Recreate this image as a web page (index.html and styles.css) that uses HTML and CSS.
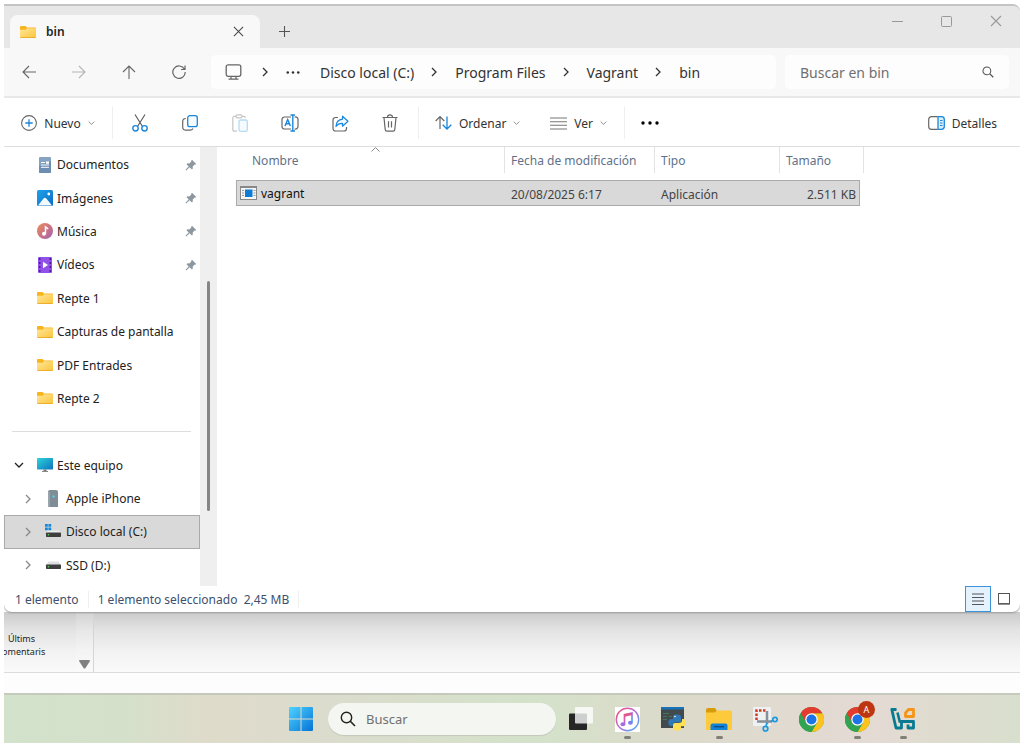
FILE: index.html
```html
<!DOCTYPE html>
<html lang="es">
<head>
  <meta charset="UTF-8">
  <title>bin</title>
  <link rel="stylesheet" href="styles.css">
</head>
<body>
  <!-- Shared icons -->
  <svg class="defs" width="0" height="0">
    <defs>
      <linearGradient id="gFolder" x1="0" y1="0" x2="1" y2="1">
        <stop offset="0" stop-color="#ffe59a"/><stop offset="1" stop-color="#fcc53a"/>
      </linearGradient>
      <linearGradient id="gWin" x1="0" y1="0" x2="1" y2="1">
        <stop offset="0" stop-color="#4fd3ff"/><stop offset="1" stop-color="#0573d6"/>
      </linearGradient>
      <linearGradient id="gBlue" x1="0" y1="0" x2="1" y2="1">
        <stop offset="0" stop-color="#1fa2ea"/><stop offset="1" stop-color="#0b6cc4"/>
      </linearGradient>
      <linearGradient id="gMusic" x1="0" y1="0" x2="1" y2="1">
        <stop offset="0" stop-color="#f08a55"/><stop offset="1" stop-color="#a45fb4"/>
      </linearGradient>
      <linearGradient id="gTunes" x1="0" y1="0" x2="1" y2="1">
        <stop offset="0" stop-color="#f7506f"/><stop offset=".5" stop-color="#b66be0"/><stop offset="1" stop-color="#3bb8f5"/>
      </linearGradient>
      <linearGradient id="gScreen" x1="0" y1="0" x2="1" y2="1">
        <stop offset="0" stop-color="#2fd3dc"/><stop offset="1" stop-color="#0b74bd"/>
      </linearGradient>
    </defs>
    <symbol id="folder" viewBox="0 0 16 12">
      <path d="M0 1a1 1 0 0 1 1-1h4.500l1.500 1.600h8a1 1 0 0 1 1 1V11H0z" fill="#f7b51d"/>
      <path d="M0 3.800h5.500L7 2.300h9V11.300a.7.7 0 0 1-.7.7H.7a.7.7 0 0 1-.7-.7z" fill="url(#gFolder)"/>
      <path d="M.5 11.600h15" stroke="#e3a220" stroke-width=".8"/>
    </symbol>
    <symbol id="pin" viewBox="0 0 12 12">
      <path d="M7 .8 11.200 5l-.9.7-.6-.1-2 2 .1 1.900-.9.9-2.300-2.200L1.200 11.500l-.7-.7 3.200-3.400L1.500 5.200l.9-.9 1.900.1 2-2-.1-.7z" fill="#8d979f"/>
    </symbol>
    <symbol id="right" viewBox="0 0 8 10">
      <path d="M2 1l4 4-4 4" fill="none" stroke="currentColor" stroke-width="1.300"/>
    </symbol>
    <symbol id="down" viewBox="0 0 10 8">
      <path d="M1 2l4 4 4-4" fill="none" stroke="currentColor" stroke-width="1.300"/>
    </symbol>
    <symbol id="dots" viewBox="0 0 18 4">
      <circle cx="2" cy="2" r="1.700"/><circle cx="9" cy="2" r="1.700"/><circle cx="16" cy="2" r="1.700"/>
    </symbol>
    <symbol id="close" viewBox="0 0 12 12">
      <path d="M1 1l10 10M11 1L1 11" fill="none" stroke="currentColor" stroke-width="1.100"/>
    </symbol>
    <symbol id="glass" viewBox="0 0 16 16">
      <circle cx="6.500" cy="6.500" r="5.200" fill="none" stroke="currentColor" stroke-width="1.400"/>
      <path d="M10.300 10.300L15 15" stroke="currentColor" stroke-width="1.600"/>
    </symbol>
    <symbol id="chrome" viewBox="0 0 24 24">
      <circle cx="12" cy="12" r="12" fill="#32a350"/>
      <path d="M12 6h10.400A12 12 0 0 1 12 24l5.200-9z" fill="#fcc31e"/>
      <path d="M1.600 6A12 12 0 0 1 22.400 6H12L6.800 15z" fill="#e33b2e"/>
      <path d="M1.600 6 6.800 15 12 18l5.200-3L12 24A12 12 0 0 1 1.600 6z" fill="#32a350"/>
      <circle cx="12" cy="12" r="6" fill="#fff"/>
      <circle cx="12" cy="12" r="4.800" fill="#1d73e8"/>
    </symbol>
  </svg>

  <div class="screen">
    <main class="window">
      <header class="tabs">
        <div class="tab">
          <svg class="folder" width="16" height="12"><use href="#folder"/></svg>
          <span class="tab-name">bin</span>
          <button class="plain" aria-label="Cerrar pestaña"><svg width="11" height="11"><use href="#close"/></svg></button>
        </div>
        <button class="plain new-tab" aria-label="Nueva pestaña">
          <svg width="11" height="11" viewBox="0 0 11 11"><path d="M5.500 0v11M0 5.500h11" stroke="#555" stroke-width="1.100"/></svg>
        </button>
        <div class="win-controls">
          <button class="plain" aria-label="Minimizar"><svg width="11" height="11"><path d="M0 5.500h11" stroke="#999"/></svg></button>
          <button class="plain" aria-label="Maximizar"><svg width="11" height="11"><rect x=".5" y=".5" width="10" height="10" rx="1" fill="none" stroke="#999"/></svg></button>
          <button class="plain" aria-label="Cerrar"><svg width="12" height="12"><use href="#close"/></svg></button>
        </div>
      </header>

      <nav class="navbar">
        <button class="plain" aria-label="Atrás"><svg width="14" height="14" viewBox="0 0 14 14"><path d="M14 7H1M7 1L1 7l6 6" fill="none" stroke="#666" stroke-width="1.100"/></svg></button>
        <button class="plain" aria-label="Adelante"><svg width="14" height="14" viewBox="0 0 14 14"><path d="M0 7h13M7 1l6 6-6 6" fill="none" stroke="#b5b5b5" stroke-width="1.100"/></svg></button>
        <button class="plain" aria-label="Arriba"><svg width="14" height="14" viewBox="0 0 14 14"><path d="M7 14V1M1 7l6-6 6 6" fill="none" stroke="#666" stroke-width="1.100"/></svg></button>
        <button class="plain" aria-label="Actualizar"><svg width="14" height="14" viewBox="0 0 14 14"><path d="M12.500 4.300A6.200 6.200 0 1 0 13.200 7M13 .5v4H9" fill="none" stroke="#666" stroke-width="1.200"/></svg></button>
        <div class="address">
          <svg width="17" height="16" viewBox="0 0 17 16"><rect x="1.200" y=".8" width="14.600" height="11.500" rx="2" fill="none" stroke="#666" stroke-width="1.300"/><path d="M6 12.500v2.500M11 12.500v2.500M3.500 15.200h10" stroke="#666" stroke-width="1.200"/></svg>
          <svg class="sep first" width="8" height="10"><use href="#right"/></svg>
          <svg class="more" width="14" height="3"><use href="#dots"/></svg>
          <button class="plain crumb">Disco local (C:)</button>
          <svg class="sep" width="8" height="10"><use href="#right"/></svg>
          <button class="plain crumb">Program Files</button>
          <svg class="sep" width="8" height="10"><use href="#right"/></svg>
          <button class="plain crumb">Vagrant</button>
          <svg class="sep" width="8" height="10"><use href="#right"/></svg>
          <button class="plain crumb">bin</button>
        </div>
        <label class="find">
          <input type="text" placeholder="Buscar en bin" aria-label="Buscar en bin">
          <svg width="12" height="12"><use href="#glass"/></svg>
        </label>
      </nav>

      <div class="commands">
        <button class="plain command new">
          <svg width="16" height="16" viewBox="0 0 16 16"><circle cx="8" cy="8" r="7.400" fill="none" stroke="#666" stroke-width="1.100"/><path d="M8 4.300v7.400M4.300 8h7.400" stroke="#1a86dc" stroke-width="1.300"/></svg>
          <span>Nuevo</span>
          <svg class="drop" width="7" height="6"><use href="#down"/></svg>
        </button>
        <div class="group">
          <button class="plain" aria-label="Cortar"><svg width="16" height="18" viewBox="0 0 16 18"><path d="M3 .5l7.500 12M13 .5L5.500 12.500" stroke="#555" stroke-width="1.100"/><circle cx="3.500" cy="14.300" r="2.700" fill="none" stroke="#1a86dc" stroke-width="1.400"/><circle cx="12.500" cy="14.300" r="2.700" fill="none" stroke="#1a86dc" stroke-width="1.400"/></svg></button>
          <button class="plain" aria-label="Copiar"><svg width="16" height="16" viewBox="0 0 16 16"><rect x="5.700" y=".7" width="9.600" height="11" rx="2.200" fill="#f6fbff" stroke="#1a86dc" stroke-width="1.300"/><path d="M3.800 3.500C1.800 3.500.7 4.500.7 6.500V12c0 2 1.300 3.200 3.300 3.200h4c1.500 0 2.500-.6 3-1.700" fill="none" stroke="#666" stroke-width="1.200"/></svg></button>
          <button class="plain" aria-label="Pegar"><svg width="16" height="18" viewBox="0 0 16 18"><path d="M5 17.200H2.500A1.600 1.600 0 0 1 .8 15.500V4a1.600 1.600 0 0 1 1.700-1.600H4M10 2.400h1.700A1.600 1.600 0 0 1 13.300 4" fill="none" stroke="#c6c6c6" stroke-width="1.200"/><rect x="4" y=".8" width="6" height="3" rx="1.300" fill="none" stroke="#c6c6c6" stroke-width="1.200"/><rect x="7" y="6" width="8.300" height="11.300" rx="1.600" fill="#f5fbff" stroke="#b5dcf5" stroke-width="1.300"/></svg></button>
          <button class="plain" aria-label="Cambiar nombre"><svg width="18" height="18" viewBox="0 0 18 18"><path d="M10 3H3.500A2.500 2.500 0 0 0 1 5.500v7A2.500 2.500 0 0 0 3.500 15H10M13.500 3h.5A2.500 2.500 0 0 1 17 5.500v7a2.500 2.500 0 0 1-3 2.500h-.5" fill="none" stroke="#666" stroke-width="1.200"/><path d="M4 12l2.700-6.500L9.400 12M5 9.800h3.500M9.500 1h4.500M9.500 17h4.500M11.800 1v16" fill="none" stroke="#1a86dc" stroke-width="1.400"/></svg></button>
          <button class="plain" aria-label="Compartir"><svg width="17" height="17" viewBox="0 0 17 17"><path d="M6 2.500H3.500A2.500 2.500 0 0 0 1 5v8.500A2.500 2.500 0 0 0 3.500 16h8.500a2.500 2.500 0 0 0 2.500-2.500V12" fill="none" stroke="#666" stroke-width="1.200"/><path d="M10.500 1.200l5.500 5-5.500 5V8.300C7.500 8.200 5.500 9.300 4 11.500c.2-4 2.500-6.900 6.500-7.300z" fill="#f3faff" stroke="#1a86dc" stroke-width="1.200" stroke-linejoin="round"/></svg></button>
          <button class="plain" aria-label="Eliminar"><svg width="16" height="18" viewBox="0 0 16 18"><path d="M.5 3.500h15M5.500 3.300a2.500 2.500 0 0 1 5 0M2 3.800l1.200 11.700A1.800 1.800 0 0 0 5 17.200h6a1.800 1.800 0 0 0 1.800-1.700L14 3.800M6.500 7.200v6.300M9.500 7.200v6.300" fill="none" stroke="#666" stroke-width="1.200"/></svg></button>
        </div>
        <div class="group views">
          <button class="plain command">
            <svg width="17" height="16" viewBox="0 0 17 16"><path d="M5 14V1.500M.7 6L5 1.500 9.300 6" fill="none" stroke="#666" stroke-width="1.200"/><path d="M12 1.500V14M7.700 9.800L12 14l4.300-4.200" fill="none" stroke="#1a86dc" stroke-width="1.300"/></svg>
            <span>Ordenar</span>
            <svg class="drop" width="7" height="6"><use href="#down"/></svg>
          </button>
          <button class="plain command">
            <svg width="17" height="13" viewBox="0 0 17 13"><path d="M0 1h17M0 4.700h17M0 8.300h17M0 12h17" stroke="#777" stroke-width="1.100"/></svg>
            <span>Ver</span>
            <svg class="drop" width="7" height="6"><use href="#down"/></svg>
          </button>
        </div>
        <button class="plain overflow" aria-label="Ver más"><svg width="18" height="4"><use href="#dots"/></svg></button>
        <button class="plain command details">
          <svg width="17" height="14" viewBox="0 0 17 14"><path d="M9.500.7H3.500A2.800 2.800 0 0 0 .7 3.500v7a2.800 2.800 0 0 0 2.800 2.800h6" fill="none" stroke="#666" stroke-width="1.200"/><path d="M10 .7h3.500a2.800 2.800 0 0 1 2.800 2.800v7a2.800 2.800 0 0 1-2.800 2.800H10z" fill="#d9effc" stroke="#1a86dc" stroke-width="1.300"/><path d="M12 4.500h2.500M12 7h2.500M12 9.500h2.500" stroke="#1a86dc"/></svg>
          <span>Detalles</span>
        </button>
      </div>

      <div class="content">
        <aside class="sidebar">
          <ul class="tree">
            <li class="item">
              <svg width="16" height="16" viewBox="0 0 16 16"><rect x="2" y="0" width="12" height="16" rx="1" fill="#86a3c2"/><path d="M2 9l12-5v11a1 1 0 0 1-1 1H3a1 1 0 0 1-1-1z" fill="#6d8eb2"/><path d="M4 5.500h4M4 8h8M4 10.300h8" stroke="#fff"/><rect x="9" y="4.500" width="3" height="2.300" fill="#fff"/></svg>
              <span>Documentos</span><svg class="pin" width="12" height="12"><use href="#pin"/></svg></li>
            <li class="item">
              <svg width="16" height="16" viewBox="0 0 16 16"><rect width="16" height="16" rx="1.500" fill="url(#gBlue)"/><path d="M1 15.500l5.500-7a1.800 1.800 0 0 1 2.800 0l5.700 7z" fill="#f3faff"/><circle cx="11.800" cy="4" r="1.400" fill="#fff"/></svg>
              <span>Imágenes</span><svg class="pin" width="12" height="12"><use href="#pin"/></svg></li>
            <li class="item">
              <svg width="16" height="16" viewBox="0 0 16 16"><circle cx="8" cy="8" r="8" fill="url(#gMusic)"/><path d="M8.500 10.500V4l2.700 1.800" fill="none" stroke="#fff" stroke-width="1.500"/><circle cx="7" cy="10.700" r="2" fill="#fff"/></svg>
              <span>Música</span><svg class="pin" width="12" height="12"><use href="#pin"/></svg></li>
            <li class="item">
              <svg width="16" height="16" viewBox="0 0 16 16"><rect x="1" width="14" height="16" rx="1" fill="#9150e8"/><path d="M2.700 1v14M13.300 1v14" stroke="#4d1b98" stroke-width="1.500" stroke-dasharray="2 2"/><path d="M6 4.800l5 3.200-5 3.200z" fill="#fff"/></svg>
              <span>Vídeos</span><svg class="pin" width="12" height="12"><use href="#pin"/></svg></li>
            <li class="item"><svg width="16" height="12"><use href="#folder"/></svg><span>Repte 1</span></li>
            <li class="item"><svg width="16" height="12"><use href="#folder"/></svg><span>Capturas de pantalla</span></li>
            <li class="item"><svg width="16" height="12"><use href="#folder"/></svg><span>PDF Entrades</span></li>
            <li class="item"><svg width="16" height="12"><use href="#folder"/></svg><span>Repte 2</span></li>
            <li class="item divider"></li>
            <li class="item parent">
              <svg class="open" width="10" height="8"><use href="#down"/></svg>
              <svg width="16" height="14" viewBox="0 0 16 14"><rect width="16" height="11.500" rx=".7" fill="url(#gScreen)"/><path d="M6.500 11.500h3v1.500h-3z" fill="#777"/><path d="M5 13.500h6" stroke="#888"/></svg>
              <span>Este equipo</span></li>
            <li class="item child">
              <svg class="closed" width="8" height="10"><use href="#right"/></svg>
              <svg width="16" height="17" viewBox="0 0 16 17"><path d="M3 2a2 2 0 0 1 2-2h6a2 2 0 0 1 2 2v15H3z" fill="#7f8d97"/><path d="M3 2h2v15H3z" fill="#98a5ad"/><circle cx="8.500" cy="6.500" r="1.200" fill="#55c9e8"/></svg>
              <span>Apple iPhone</span></li>
            <li class="item child selected">
              <svg class="closed" width="8" height="10"><use href="#right"/></svg>
              <svg width="16" height="16" viewBox="0 0 16 16"><path d="M2.500 6.500h11L16 9H1z" fill="#eee"/><rect x="1" y="8.500" width="15" height="4.500" rx=".7" fill="#3e3e3e"/><circle cx="3.500" cy="10.700" r=".8" fill="#4bdc4b"/><path d="M0 0h2.800v2.800H0zM3.400 0h2.800v2.800H3.400zM0 3.400h2.800v2.800H0zM3.400 3.400h2.800v2.800H3.400z" fill="#1489dc"/></svg>
              <span>Disco local (C:)</span></li>
            <li class="item child">
              <svg class="closed" width="8" height="10"><use href="#right"/></svg>
              <svg width="16" height="16" viewBox="0 0 16 16"><path d="M3.500 4.500h10L16 8H1z" fill="#dfdfe2"/><rect x="1" y="7.500" width="15" height="4.500" rx=".7" fill="#3e3e3e"/><circle cx="3.500" cy="9.700" r=".8" fill="#4bdc4b"/></svg>
              <span>SSD (D:)</span></li>
          </ul>
          <div class="scrollbar"><div class="thumb"></div></div>
        </aside>

        <section class="files">
          <table>
            <colgroup>
              <col class="c-name"><col class="c-date"><col class="c-type"><col class="c-size"><col>
            </colgroup>
            <thead>
              <tr>
                <th class="sorted"><div>Nombre</div><svg class="sort" width="9" height="5" viewBox="0 0 9 5"><path d="M.5 4.500l4-4 4 4" fill="none" stroke="#888"/></svg></th>
                <th><div>Fecha de modificación</div></th>
                <th><div>Tipo</div></th>
                <th colspan="2"><div>Tamaño</div></th>
              </tr>
            </thead>
            <tbody>
              <tr>
                <td><svg width="17" height="14" viewBox="0 0 17 14"><rect x=".5" y=".5" width="16" height="13" fill="#f5f5f5" stroke="#888"/><path d="M1 1.500h15" stroke="#888"/><path d="M2 4.500h2M2 7h2M2 9.500h2M13.500 4.500h2M13.500 7h2M13.500 9.500h2" stroke="#999"/><rect x="5" y="3.500" width="7.500" height="7.500" fill="#0c7bd4"/></svg>vagrant</td>
                <td>20/08/2025 6:17</td>
                <td>Aplicación</td>
                <td>2.511 KB</td>
              </tr>
            </tbody>
          </table>
        </section>
      </div>

      <footer class="status">
        <span class="cell">1 elemento</span>
        <span class="cell">1 elemento seleccionado&nbsp; 2,45 MB</span>
        <div class="layouts">
          <button class="plain layout active" aria-label="Detalles"><svg width="12" height="12" viewBox="0 0 12 12"><path d="M0 1h12M0 4.500h12M0 8h12M0 11.500h12" stroke="#555"/></svg></button>
          <button class="plain layout" aria-label="Iconos grandes"><svg width="12" height="12" viewBox="0 0 12 12"><rect x=".5" y=".5" width="11" height="10" fill="#fff" stroke="#555"/><path d="M0 11.300h12" stroke="#777"/></svg></button>
        </div>
      </footer>
    </main>

    <!-- Window behind the explorer -->
    <div class="behind">
      <div class="ribbon">
        <div class="comments"><span>Últims</span><span>comentaris</span></div>
        <div class="ribbon-scroll"><svg width="11" height="9" viewBox="0 0 11 9"><path d="M0 1a1 1 0 0 1 1-1h9a1 1 0 0 1 1 1L6.500 8a1.300 1.300 0 0 1-2 0z" fill="#808080"/></svg></div>
      </div>
    </div>

    <div class="taskbar">
      <button class="plain app start" aria-label="Inicio"><svg width="24" height="24" viewBox="0 0 24 24"><path d="M0 1a1 1 0 0 1 1-1h10.500v11.500H0zM12.500 0H23a1 1 0 0 1 1 1v10.500H12.500zM0 12.500h11.500V24H1a1 1 0 0 1-1-1zM12.500 12.500H24V23a1 1 0 0 1-1 1H12.500z" fill="url(#gWin)"/></svg></button>
      <label class="task-search">
        <svg width="16" height="16"><use href="#glass"/></svg>
        <input type="text" placeholder="Buscar" aria-label="Buscar">
      </label>
      <button class="plain app" aria-label="Vista de tareas"><svg width="26" height="24" viewBox="0 0 26 24"><rect x="1" y="6.500" width="18" height="16.500" rx="1" fill="#262626"/><rect x="7" y="0" width="18" height="16.500" rx="1" fill="#fff" opacity=".78"/></svg></button>
      <button class="plain app running" aria-label="iTunes"><svg width="25" height="25" viewBox="0 0 25 25"><rect width="25" height="25" fill="#fff"/><circle cx="12.500" cy="12.500" r="11.200" fill="none" stroke="url(#gTunes)" stroke-width="1.400"/><path d="M9.500 17V7.700l7.500-1.600v9.300" fill="none" stroke="url(#gTunes)" stroke-width="1.700"/><path d="M9.500 8.500l7.500-1.600" stroke="#dc5996" stroke-width="2.500"/><ellipse cx="7.900" cy="17.300" rx="2.400" ry="2" fill="#a56be0"/><ellipse cx="15.400" cy="15.800" rx="2.400" ry="2" fill="#7b80ec"/></svg></button>
      <button class="plain app" aria-label="Python"><svg width="25" height="24" viewBox="0 0 25 24"><rect x="0" y="0" width="23" height="21" fill="#414b4e"/><rect width="23" height="2.500" fill="#1a72b8"/><path d="M2 6.500h6M2 9.500h4M2 12.500h4M8 9.500h3" stroke="#49745a"/><path d="M12 12v-2.500C12 8 13.500 7.500 16 7.500s4 .7 4 2.500v3.500c0 1.500-1 2-2 2h-4c-1.500 0-2.200 1-2.200 2.500v1H10c-2 0-2.700-1.500-2.700-3.500S8.300 12 10 12z" fill="#2f78b5"/><path d="M21 12h1.200c1.700 0 2.500 1.500 2.500 3.700s-1 3.500-2.700 3.500h-2v2c0 1.500-1.500 2.300-4 2.300s-4-.8-4-2.300V18c0-1.300.8-2 2-2h4c2 0 3-1 3-2.700z" fill="#ffe052"/><circle cx="14" cy="9.500" r=".8" fill="#fff"/></svg></button>
      <button class="plain app running" aria-label="Explorador de archivos"><svg width="26" height="24" viewBox="0 0 26 24"><path d="M0 3a2 2 0 0 1 2-2h7l2 3v3H0z" fill="#d89b0a"/><path d="M0 5.500h8.500L11 3.500h13a2 2 0 0 1 2 2V23H0z" fill="#fdca3c"/><path d="M4.500 23v-4.500a2 2 0 0 1 2-2h13a2 2 0 0 1 2 2V23z" fill="#1482d4"/><path d="M8 19.700h10" stroke="#074b87" stroke-width="1.300"/></svg></button>
      <button class="plain app" aria-label="Recortes"><svg width="26" height="26" viewBox="0 0 26 26"><rect x="1" y="1" width="18" height="19" rx="1" fill="#eef1f4"/><path d="M4.500 14V4.500h10" fill="none" stroke="#cf3b1e" stroke-width="2.500" stroke-dasharray="2.500 1.500"/><path d="M15 5v13M5 15.500h15" fill="none" stroke="#888f98" stroke-width="2.500"/><path d="M15 17l-1 3M18.500 15.500l3-1" stroke="#1b9ae0" stroke-width="1.700"/><circle cx="13.500" cy="22.700" r="2.300" fill="none" stroke="#1b9ae0" stroke-width="1.700"/><circle cx="23" cy="13.500" r="2.200" fill="none" stroke="#1b9ae0" stroke-width="1.700"/></svg></button>
      <button class="plain app" aria-label="Chrome"><svg width="25" height="25"><use href="#chrome"/></svg></button>
      <button class="plain app running" aria-label="Chrome, perfil A"><svg width="25" height="25"><use href="#chrome"/></svg><span class="badge">A</span></button>
      <button class="plain app running" aria-label="VirtualBox"><svg width="26" height="24" viewBox="0 0 26 24"><path d="M6.500 2.500H1.800L6 21h5.500v-6.500h12V21H18v-3.500" fill="none" stroke="#087a92" stroke-width="2.800" stroke-linejoin="round"/><path d="M7.500 5.500l2.200 9h3" fill="none" stroke="#087a92" stroke-width="2.600"/><path d="M23.500 9.500V2.500h-5l-3 3.500v3.500z" fill="none" stroke="#f59518" stroke-width="2.800" stroke-linejoin="round"/></svg></button>
    </div>
  </div>
</body>
</html>
```
FILE: styles.css
```css
* {
  box-sizing: border-box;
}

body {
  margin: 0;
  padding: 4px;
  background: #fff;
  color: #222;
  font-family: "Noto Sans", "Open Sans", sans-serif;
  font-size: 12px;
}

svg {
  flex: none;
  display: block;
}

.defs {
  position: absolute;
}

.plain {
  display: flex;
  align-items: center;
  justify-content: center;
  padding: 0;
  border: none;
  background: none;
  color: inherit;
  font: inherit;
}

input {
  flex: 1;
  min-width: 0;
  padding: 0;
  border: none;
  outline: none;
  background: none;
  font: inherit;
}

.screen {
  display: flex;
  flex-direction: column;
  height: calc(100vh - 8px);
  overflow: hidden;
}

.window {
  flex: 1;
  display: flex;
  flex-direction: column;
  min-height: 0;
  border-top: 2px solid #c4c4c4;
  border-radius: 0 8px 8px 8px;
  background: #fff;
  box-shadow: 0 1px 2px #999;
  overflow: hidden;
  z-index: 1;
}

/* Tabs */
.tabs {
  display: flex;
  height: 42px;
  padding-left: 6px;
  background: #e7e7e7;
}

.tab {
  display: flex;
  align-items: center;
  width: 250px;
  margin-top: 9px;
  padding: 0 16px 0 10px;
  border-radius: 8px 8px 0 0;
  background: #f8f8f8;
  color: #444;
}

.tab-name {
  flex: 1;
  padding-left: 10px;
  color: #222;
  font-weight: 600;
}

.new-tab {
  width: 49px;
  margin-top: 9px;
}

.win-controls {
  display: flex;
  height: 30px;
  margin-left: auto;
  color: #999;
}

.win-controls button {
  width: 49px;
}

/* Navigation */
.navbar {
  display: flex;
  align-items: center;
  height: 50px;
  padding-right: 11px;
  border-bottom: 2px solid #e8e8e8;
  background: #f8f8f8;
  color: #333;
  font-size: 14px;
}

.navbar > button {
  width: 50px;
  height: 34px;
}

.address {
  flex: 1;
  display: flex;
  align-items: center;
  height: 34px;
  margin: 0 9px 0 7px;
  padding-left: 14px;
  border-radius: 5px;
  background: #fdfdfd;
}

.sep {
  margin: 0 17px 0 16px;
}

.first {
  margin-left: 19px;
}

.more {
  margin-right: 20px;
  fill: #333;
}

.find {
  display: flex;
  align-items: center;
  width: 224px;
  height: 34px;
  padding: 0 15px;
  border-radius: 5px;
  background: #fdfdfd;
  color: #555;
}

.find input::placeholder,
.task-search input::placeholder {
  color: #707070;
  opacity: 1;
}

/* Commands */
.commands {
  display: flex;
  align-items: center;
  height: 49px;
  padding: 2px 23px 0 0;
  border-bottom: 1px solid #ddd;
  color: #333;
}

.command {
  gap: 7px;
}

.new {
  width: 109px;
  height: 32px;
  border-right: 1px solid #eee;
}

.drop {
  color: #888;
}

.group {
  display: flex;
  height: 32px;
  padding: 0 3px 0 2px;
  border-right: 1px solid #eee;
}

.group > button {
  width: 50px;
}

.views {
  gap: 30px;
  padding: 0 17px 0 16px;
}

.views > button {
  width: auto;
}

.overflow {
  width: 50px;
}

.details {
  margin-left: auto;
}

/* Content */
.content {
  flex: 1;
  display: flex;
  min-height: 0;
}

.sidebar {
  display: flex;
  width: 213px;
}

.tree {
  flex: 1;
  display: flex;
  flex-direction: column;
  margin: 0;
  padding: 1px 0 4px;
  list-style: none;
}

.item {
  flex: 1;
  display: flex;
  align-items: center;
  gap: 4px;
  padding: 0 3px 0 33px;
}

.pin {
  margin-left: auto;
}

.divider {
  padding: 0;
}

.divider::after {
  content: "";
  flex: 1;
  margin: 0 9px 0 8px;
  border-top: 1px solid #ddd;
}

.parent {
  padding-left: 10px;
}

.open {
  margin-right: 9px;
}

.child {
  gap: 5px;
  padding-left: 20px;
}

.closed {
  margin-right: 8px;
  color: #888;
}

.selected {
  background: #d9d9d9;
  box-shadow: inset 0 0 0 1px #aaa;
}

.scrollbar {
  width: 17px;
  padding: 134px 7px 75px;
  background: #efefef;
}

.thumb {
  width: 3px;
  height: 100%;
  border-radius: 2px;
  background: #858585;
}

.files {
  flex: 1;
  padding-left: 19px;
}

table {
  width: 628px;
  table-layout: fixed;
  border-spacing: 0;
}

.c-name {
  width: 269px;
}

.c-date {
  width: 150px;
}

.c-type {
  width: 125px;
}

.c-size {
  width: 80px;
}

th {
  padding: 0 0 7px;
  color: #62718a;
  font-weight: normal;
  text-align: left;
}

th div {
  height: 26px;
  padding-left: 6px;
  border-right: 1px solid #e3e3e3;
  line-height: 28px;
}

.sorted {
  position: relative;
}

.sorted div {
  padding-left: 16px;
}

.sort {
  position: absolute;
  top: 0;
  left: 50%;
}

td {
  height: 26px;
  padding: 2px 6px 0;
  border: 1px solid #aaa;
  border-width: 1px 0;
  background: #d9d9d9;
  color: #444;
}

td:first-child {
  display: flex;
  align-items: center;
  gap: 4px;
  padding: 0 3px;
  border-left-width: 1px;
  color: #111;
}

td:last-child {
  padding-right: 3px;
  border-right-width: 1px;
  text-align: right;
}

/* Status bar */
.status {
  display: flex;
  align-items: center;
  height: 26px;
  padding: 0 4px 0 2px;
  color: #3d506e;
}

.cell {
  padding: 0 9px;
  border-right: 1px solid #eee;
}

.layouts {
  display: flex;
  margin-left: auto;
}

.layout {
  width: 25px;
  height: 26px;
}

.active {
  width: 26px;
  border: 1px solid #3c93dc;
  background: #e3f2fc;
}

/* Window behind */
.behind {
  height: 81px;
  background: #fdfdfd;
}

.ribbon {
  display: flex;
  height: 61px;
  border-bottom: 1px solid #dcdcdc;
  background: linear-gradient(#cbcbcb, #e3e3e3 30%, #f2f2f2 65%, #fafafa);
}

.comments {
  display: flex;
  flex-direction: column;
  align-items: center;
  width: 35px;
  margin-right: 37px;
  padding-top: 20px;
  font-size: 9px;
  line-height: 13px;
}

.ribbon-scroll {
  display: flex;
  align-items: flex-end;
  justify-content: center;
  width: 18px;
  padding-bottom: 3px;
  border-right: 1px solid #d5d5d5;
  background: rgba(255, 255, 255, 0.15);
}

/* Taskbar */
.taskbar {
  display: flex;
  align-items: center;
  height: 50px;
  padding-left: 274px;
  border-top: 2px solid #c5cabd;
  background: linear-gradient(90deg, #d2e2cb, #d5e0cb 12%, #dfdbcb 20%, #dbdccd 32%, #d4e2ca 52%, #dcdacb 66%, #e4dad4 85%, #dfdccf 92%, #d8dfcd);
}

.app {
  position: relative;
  width: 46px;
  height: 100%;
}

.running::after {
  content: "";
  position: absolute;
  bottom: 4px;
  left: 20px;
  width: 7px;
  height: 3px;
  border-radius: 2px;
  background: #808078;
}

.task-search {
  display: flex;
  align-items: center;
  gap: 10px;
  width: 228px;
  height: 32px;
  margin: 0 2px 0 4px;
  padding: 0 12px;
  border-radius: 16px;
  background: #f4f6f1;
  box-shadow: 0 1px 1px #c2c8bb;
  color: #222;
  font-size: 13px;
}

.badge {
  position: absolute;
  top: 6px;
  right: 5px;
  width: 17px;
  border-radius: 50%;
  background: #bd3511;
  color: #fff;
  font-size: 9px;
  line-height: 17px;
  text-align: center;
}
```
